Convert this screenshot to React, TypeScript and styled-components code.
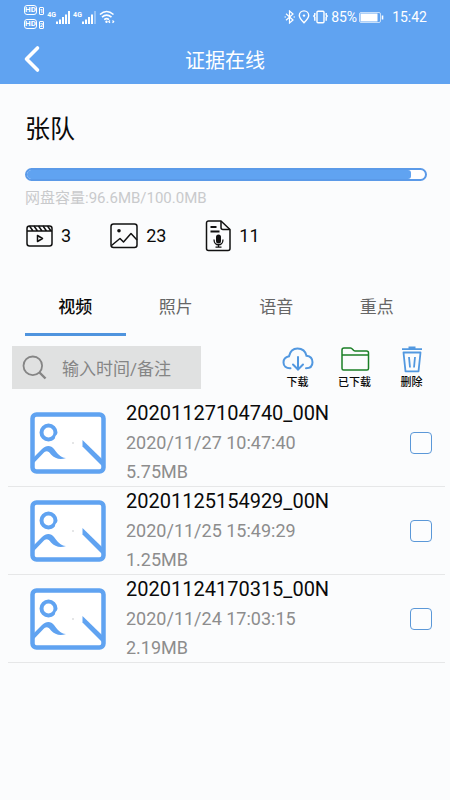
import React, { useState } from "react";
import styled, { createGlobalStyle } from "styled-components";

const BLUE = "#60a3f1";

const GlobalStyle = createGlobalStyle`
  *, *::before, *::after { box-sizing: border-box; }
  body {
    margin: 0;
    background: #fbfcfd;
    color: #0a0a0a;
    font-family: Roboto, "Noto Sans CJK SC", sans-serif;
  }
  button, input { font: inherit; color: inherit; }
  svg { display: block; flex: none; }
`;

const TopArea = styled.header`
  background: ${BLUE};
  color: #fff;
`;

const StatusBar = styled.div`
  display: flex;
  justify-content: space-between;
  align-items: center;
  height: 34px;
  padding: 0 23px 0 24px;
  font-size: 14px;
  line-height: 16px;
`;

const StatusGroup = styled.div<{ $gap: number }>`
  display: flex;
  align-items: center;
  gap: ${(p) => p.$gap}px;
`;

const SimStack = styled.div`
  display: flex;
  flex-direction: column;
  gap: 4px;
`;

const SimLine = styled.span`
  display: flex;
  align-items: flex-end;
  gap: 2px;
  height: 10px;
`;

const HdBadge = styled.span`
  border: 1px solid #fff;
  border-radius: 3px;
  font-size: 8px;
  line-height: 8px;
  font-weight: 700;
`;

const SimNumber = styled.span`
  border: 1px solid #fff;
  border-radius: 1px;
  font-size: 6px;
  line-height: 6px;
  font-weight: 700;
`;

const NetworkLabel = styled.span`
  align-self: flex-start;
  font-size: 7px;
  line-height: 8px;
  font-weight: 700;
`;

const Clock = styled.span`
  margin-left: 6px;
`;

const TitleBar = styled.div`
  display: grid;
  grid-template-columns: 48px 1fr 48px;
  align-items: center;
  height: 50px;
  padding: 0 8px;
`;

const BackButton = styled.button`
  display: flex;
  justify-content: center;
  padding: 0;
  border: 0;
  background: none;
`;

const Title = styled.h1`
  margin: 0;
  padding-top: 3px;
  text-align: center;
  font-size: 20px;
  line-height: 28px;
  font-weight: 400;
`;

const Account = styled.section`
  padding: 26px 23px 0 25px;
`;

const AccountName = styled.h2`
  margin: 0 0 18px;
  font-size: 25px;
  line-height: 40px;
  font-weight: 400;
`;

const Meter = styled.div`
  height: 13px;
  border: 2px solid #5b9ae8;
  border-radius: 7px;
  background: #fff;
  overflow: hidden;
`;

const MeterFill = styled.div`
  height: 100%;
  border-radius: 0 3px 3px 0;
  background: ${BLUE};
`;

const Capacity = styled.p`
  margin: 6px 0 0;
  color: #c9cacc;
  font-size: 15px;
  line-height: 22px;
`;

const Stats = styled.ul`
  display: flex;
  align-items: center;
  gap: 39px;
  height: 32px;
  margin: 11px 0 0;
  padding: 0;
  list-style: none;
`;

const Stat = styled.li`
  display: flex;
  align-items: center;
  gap: 8px;
  font-size: 18px;
  line-height: 24px;
`;

const Tabs = styled.nav`
  display: grid;
  grid-template-columns: repeat(4, 1fr);
  margin: 26px 23px 0 25px;
`;

const Tab = styled.button<{ $active: boolean }>`
  height: 58px;
  padding: 2px 0 0;
  border: 0;
  border-bottom: 3px solid ${(p) => (p.$active ? "#4f94de" : "transparent")};
  background: none;
  color: ${(p) => (p.$active ? "#0a0a0a" : "#666")};
  font-size: 17px;
  line-height: 24px;
  font-weight: ${(p) => (p.$active ? 500 : 400)};
`;

const Toolbar = styled.div`
  display: flex;
  justify-content: space-between;
  align-items: flex-start;
  padding: 10px 22px 0 12px;
`;

const SearchBox = styled.label`
  display: flex;
  align-items: center;
  gap: 15px;
  flex: 0 1 189px;
  min-width: 0;
  height: 43px;
  padding-left: 10px;
  background: #e0e1e1;
`;

const SearchInput = styled.input`
  flex: 1;
  min-width: 0;
  padding: 2px 0 0;
  border: 0;
  outline: 0;
  background: none;
  font-size: 17px;
  line-height: 26px;
  &::placeholder { color: #858585; opacity: 1; }
`;

const Actions = styled.div`
  display: grid;
  grid-template-columns: repeat(3, 33px);
  flex: none;
  gap: 24px;
`;

const Action = styled.button`
  display: flex;
  flex-direction: column;
  align-items: center;
  gap: 2px;
  padding: 0;
  border: 0;
  background: none;
  font-size: 11px;
  line-height: 16px;
  font-weight: 500;
  white-space: nowrap;
`;

const FileList = styled.ul`
  margin: 8px 5px 0 8px;
  padding: 0;
  list-style: none;
`;

const FileRow = styled.li`
  display: flex;
  align-items: center;
  height: 88px;
  padding: 0 13px 0 21px;
  border-bottom: 1px solid #e6e7e8;
`;

const FileInfo = styled.label`
  flex: 1;
  display: flex;
  flex-direction: column;
  margin-left: 20px;
  color: #8d8d8d;
  font-size: 18px;
  line-height: 29px;
`;

const FileName = styled.span`
  color: #0a0a0a;
  font-size: 20px;
`;

const Check = styled.input`
  appearance: none;
  width: 22px;
  height: 22px;
  margin: 0;
  border: 1px solid #5b98d8;
  border-radius: 4px;
  background: #fcfdfe;
  &:checked { background: ${BLUE}; }
`;

const SignalIcon = ({ weak = false }: { weak?: boolean }) => (
  <svg width="14" height="13" viewBox="0 0 14 13" fill="#fff">
    <rect x="0" y="10.5" width="2" height="2.5" />
    <rect x="3" y="8.5" width="2" height="4.5" />
    <rect x="6" y="6" width="2" height="7" />
    <rect x="9" y="3.5" width="2" height="9.5" />
    <rect x="12" y="0" width="2" height="13" opacity={weak ? 0.35 : 1} />
  </svg>
);

const WifiIcon = () => (
  <svg width="16" height="14" viewBox="0 0 16 14" fill="none" stroke="#fff" strokeWidth="1.6">
    <path d="M1 4.5Q7.5-1.5 14.5 4.5M3 7.2Q7.5 3 12.5 7.2M5.2 9.7Q7.6 7.6 10 9.7" />
    <circle cx="7.5" cy="11.7" r="1.2" fill="#fff" stroke="none" />
    <path d="M11 10.5l-1.2 1.2 1.2 1.2M13.5 10.5l1.2 1.2-1.2 1.2" strokeWidth="1.2" />
  </svg>
);

const BluetoothIcon = () => (
  <svg width="12" height="14" viewBox="0 0 12 14" fill="none" stroke="#fff" strokeWidth="1.2">
    <path d="M2 3.8l7 6.2-3.5 3V1L9 4 2 10.2" />
    <path d="M.5 7h1.5M9.5 7H11" />
  </svg>
);

const PinIcon = () => (
  <svg width="12" height="14" viewBox="0 0 12 14" fill="none" stroke="#fff" strokeWidth="1.4">
    <path d="M6 12.8C3.5 10.2 1.3 8 1.3 5.6a4.7 4.7 0 0 1 9.4 0C10.7 8 8.5 10.2 6 12.8z" />
    <circle cx="6" cy="5.6" r="1.2" fill="#fff" stroke="none" />
  </svg>
);

const VibrateIcon = () => (
  <svg width="17" height="14" viewBox="0 0 17 14" fill="none" stroke="#fff" strokeWidth="1.4">
    <rect x="5" y="1.2" width="7" height="11.6" rx="1" />
    <path d="M2.8 3v2l-1 1 1 1.2v3.5M14.2 3v2l1 1-1 1.2v3.5" />
  </svg>
);

const BatteryIcon = () => (
  <svg width="25" height="11" viewBox="0 0 25 11" fill="none" stroke="#fff">
    <rect x=".5" y=".5" width="21" height="10" rx="1.5" opacity=".65" />
    <rect x="2" y="2" width="16" height="7" fill="#fff" />
    <path d="M23.5 3.5v4" strokeWidth="1.6" />
  </svg>
);

const BackIcon = () => (
  <svg width="18" height="28" viewBox="0 0 18 28" fill="none" stroke="#fff" strokeWidth="3.6" strokeLinecap="round" strokeLinejoin="round">
    <path d="M14.5 3L3.5 14l11 11" />
  </svg>
);

const VideoIcon = () => (
  <svg width="28" height="24" viewBox="0 0 28 24" fill="none" stroke="#111" strokeWidth="1.5" strokeLinejoin="round">
    <rect x="2" y="2" width="25" height="20" rx="2.5" />
    <path d="M2 7h25M4.5 2l3.5 5M9 2l3.5 5M13.5 2L17 7M18 2l3.5 5M22.5 2L26 7" />
    <path d="M12.5 11.5v6l5-3z" />
  </svg>
);

const PhotoIcon = () => (
  <svg width="28" height="26" viewBox="0 0 28 26" fill="none" stroke="#111" strokeWidth="1.5" strokeLinejoin="round">
    <rect x="1" y="1" width="26" height="23.5" rx="2.5" />
    <circle cx="9" cy="7.8" r="1.8" fill="#111" stroke="none" />
    <path d="M1.5 22.5l8.5-7 3.5 3.5 7.5-8.5 6 6.5" />
  </svg>
);

const VoiceIcon = () => (
  <svg width="26" height="32" viewBox="0 0 26 32" fill="none" stroke="#111" strokeWidth="1.5" strokeLinejoin="round">
    <path d="M16 1H3.5A2 2 0 0 0 1.5 3v25.5a2 2 0 0 0 2 2H23a2 2 0 0 0 2-2V9.5z" />
    <path d="M16 1v6.5a2 2 0 0 0 2 2h7" />
    <path d="M5.5 7h6M5.5 11.5h9" strokeWidth="1.8" />
    <rect x="11" y="14.5" width="5" height="9" rx="2.5" fill="#111" stroke="none" />
    <path d="M9 19.5c0 7 9 7 9 0M13.5 25v2M10.5 27.2h6" strokeWidth="1.3" />
  </svg>
);

const SearchIcon = () => (
  <svg width="25" height="25" viewBox="0 0 25 25" fill="none" stroke="#858585" strokeWidth="1.8">
    <circle cx="10.8" cy="10.8" r="9.3" />
    <path d="M17.5 17.5l6 6" strokeWidth="2.4" />
  </svg>
);

const CloudIcon = () => (
  <svg width="32" height="27" viewBox="0 0 32 27" fill="none" stroke="#5298e0" strokeWidth="2" strokeLinecap="round">
    <path d="M8.5 22.3C4 22.5 1.5 20 1.5 16.5c0-3 2-5.5 5.5-6.2C8 5.5 11 2.5 15.5 2.5c4.8 0 8 2.8 9 7.3 3.8.5 6 3 6 6.5 0 3.7-2.5 6-6.5 6" />
    <path d="M16 11v12M11 18.5l5 5 5-5" />
  </svg>
);

const FolderIcon = () => (
  <svg width="30" height="27" viewBox="0 0 30 27" fill="none" stroke="#1b7f26" strokeWidth="1.5" strokeLinejoin="round">
    <path d="M2 22.5V4a2 2 0 0 1 2-2h6.5c2 0 2.5 3 4.5 3h11.5a2 2 0 0 1 2 2v15.5a1.5 1.5 0 0 1-1.5 1.5H3.5A1.5 1.5 0 0 1 2 22.5zM2 9h26.5" />
  </svg>
);

const TrashIcon = () => (
  <svg width="22" height="27" viewBox="0 0 22 27" fill="none" stroke="#5298e0" strokeWidth="1.8" strokeLinejoin="round">
    <path d="M1 3.2h20M7.5 1.5h7" />
    <path d="M2.5 6.5h17l-2 18.8h-13z" />
    <path d="M8 11l1 10.5M14 11l-1 10.5" />
  </svg>
);

const Thumbnail = () => (
  <svg width="77" height="62" viewBox="0 0 77 62" fill={BLUE}>
    <rect x="3.5" y="2.5" width="71" height="57" rx="4" fill="#fff" stroke={BLUE} strokeWidth="4.5" />
    <circle cx="19.5" cy="20.5" r="7" fill="none" stroke={BLUE} strokeWidth="4" />
    <path d="M31 19L26.5 24L24.5 31H34V19z" fill="#fff" />
    <path d="M3 47L13 37C17 33 22 33 25 37C28 41 31 45.5 37 46C31 48.5 26 46.5 22 42.5C19 38.5 17 38.5 14 41.5L3 53z" />
    <path d="M53.5 28L73 47V54L53.5 34.5z" />
    <circle cx="44" cy="31" r=".7" fill="#b7b9bc" />
  </svg>
);

const TAB_NAMES = ["视频", "照片", "语音", "重点"];

const FILES = [
  { name: "20201127104740_00N", date: "2020/11/27 10:47:40", size: "5.75MB" },
  { name: "20201125154929_00N", date: "2020/11/25 15:49:29", size: "1.25MB" },
  { name: "20201124170315_00N", date: "2020/11/24 17:03:15", size: "2.19MB" },
];

const USED_MB = 96.6;
const TOTAL_MB = 100;

export default function App() {
  const [tab, setTab] = useState(TAB_NAMES[0]);

  return (
    <>
      <GlobalStyle />
      <TopArea>
        <StatusBar>
          <StatusGroup $gap={3}>
            <SimStack>
              <SimLine><HdBadge>HD</HdBadge><SimNumber>1</SimNumber></SimLine>
              <SimLine><HdBadge>HD</HdBadge><SimNumber>2</SimNumber></SimLine>
            </SimStack>
            <StatusGroup $gap={0}><NetworkLabel>4G</NetworkLabel><SignalIcon /></StatusGroup>
            <StatusGroup $gap={0}><NetworkLabel>4G</NetworkLabel><SignalIcon weak /></StatusGroup>
            <WifiIcon />
          </StatusGroup>
          <StatusGroup $gap={2}>
            <BluetoothIcon />
            <PinIcon />
            <VibrateIcon />
            <span>85%</span>
            <BatteryIcon />
            <Clock>15:42</Clock>
          </StatusGroup>
        </StatusBar>
        <TitleBar>
          <BackButton type="button" aria-label="返回"><BackIcon /></BackButton>
          <Title>证据在线</Title>
        </TitleBar>
      </TopArea>

      <main>
        <Account>
          <AccountName>张队</AccountName>
          <Meter role="progressbar" aria-label="网盘容量" aria-valuenow={USED_MB} aria-valuemax={TOTAL_MB}>
            <MeterFill style={{ width: `${(USED_MB / TOTAL_MB) * 100}%` }} />
          </Meter>
          <Capacity>网盘容量:96.6MB/100.0MB</Capacity>
          <Stats>
            <Stat><VideoIcon />3</Stat>
            <Stat><PhotoIcon />23</Stat>
            <Stat><VoiceIcon />11</Stat>
          </Stats>
        </Account>

        <Tabs>
          {TAB_NAMES.map((name) => (
            <Tab key={name} type="button" $active={name === tab} onClick={() => setTab(name)}>
              {name}
            </Tab>
          ))}
        </Tabs>

        <Toolbar>
          <SearchBox>
            <SearchIcon />
            <SearchInput type="text" aria-label="搜索" placeholder="输入时间/备注" />
          </SearchBox>
          <Actions>
            <Action type="button"><CloudIcon />下载</Action>
            <Action type="button"><FolderIcon />已下载</Action>
            <Action type="button"><TrashIcon />删除</Action>
          </Actions>
        </Toolbar>

        <FileList>
          {FILES.map((file) => (
            <FileRow key={file.name}>
              <Thumbnail />
              <FileInfo htmlFor={file.name}>
                <FileName>{file.name}</FileName>
                <span>{file.date}</span>
                <span>{file.size}</span>
              </FileInfo>
              <Check type="checkbox" id={file.name} />
            </FileRow>
          ))}
        </FileList>
      </main>
    </>
  );
}
